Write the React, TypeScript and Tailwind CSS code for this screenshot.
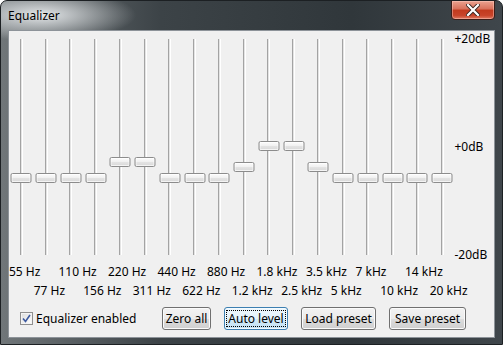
import React from "react";

// band label + thumb centre (px, page coords)
const BANDS: [string, number][] = [
  ["55 Hz", 178],
  ["77 Hz", 178],
  ["110 Hz", 178],
  ["156 Hz", 178],
  ["220 Hz", 162],
  ["311 Hz", 162],
  ["440 Hz", 178],
  ["622 Hz", 178],
  ["880 Hz", 178],
  ["1.2 kHz", 167],
  ["1.8 kHz", 146],
  ["2.5 kHz", 146],
  ["3.5 kHz", 167],
  ["5 kHz", 178],
  ["7 kHz", 178],
  ["10 kHz", 178],
  ["14 kHz", 178],
  ["20 kHz", 178],
];

const TRACK_TOP = 39;

function Button({ label, w, focused }: { label: string; w: string; focused?: boolean }) {
  return (
    <div
      className={`${w} h-[23px] rounded-[3px] border flex items-center justify-center text-[12px] text-black ${
        focused
          ? "border-[#3c7fb1] bg-[linear-gradient(#eef7fc,#e3f2fb_50%,#d3eaf8_50%,#c3e1f3)] shadow-[inset_0_0_0_1px_#f4fbff]"
          : "border-[#707070] bg-[linear-gradient(#f2f2f2,#ebebeb_50%,#dddddd_50%,#cfcfcf)] shadow-[inset_0_0_0_1px_#fbfbfb]"
      }`}
    >
      {focused ? (
        <span className="px-[1px] outline outline-1 outline-dotted outline-black leading-[15px]">{label}</span>
      ) : (
        <span className="leading-[15px]">{label}</span>
      )}
    </div>
  );
}

export default function App() {
  return (
    <div className="w-[503px] h-[345px] flex flex-col rounded-t-[7px] border border-[#1c2023] overflow-hidden font-['Noto_Sans',sans-serif] bg-[image:radial-gradient(ellipse_95px_26px_at_40px_14px,rgba(235,238,240,0.95),rgba(235,238,240,0)),linear-gradient(90deg,#707679,#3c4347_32%,#30373b_70%,#3f464b)]">
      {/* Title bar */}
      <div className="relative h-[29px] shrink-0 flex items-center pl-[7px]">
        <span className="text-[12px] text-black">Equalizer</span>
        <div className="absolute top-[-1px] right-[7px] w-[44px] h-[20px] rounded-b-[4px] border border-[#3b1d18] bg-[linear-gradient(#eba290,#d8705a_45%,#c23a1e_50%,#c8442a_80%,#e07a62)] shadow-[inset_0_0_0_1px_rgba(255,210,200,0.45)] flex items-center justify-center">
          <svg width="14" height="12" viewBox="0 0 14 12">
            <path d="M2 1 L12 11 M12 1 L2 11" stroke="#3a2520" strokeWidth="4" strokeLinecap="square" />
            <path d="M2 1 L12 11 M12 1 L2 11" stroke="#ffffff" strokeWidth="2.2" strokeLinecap="square" />
          </svg>
        </div>
      </div>

      {/* Client area */}
      <div className="mx-[7px] mb-[6px] flex-1 border border-[#8d9399] bg-[#f0f0f0] flex flex-col">
        <div className="flex pt-[8px]">
          <div className="grid grid-cols-[repeat(18,24.76px)]">
            {BANDS.map(([name, y]) => (
              <div key={name} className="relative h-[216px] flex justify-center">
                <div className="w-[3px] h-full border-l border-[#a3a3a3] bg-[linear-gradient(90deg,#e4e4e4_50%,#ffffff_50%)]" />
                <div
                  className="absolute left-1/2 -translate-x-1/2 w-[21px] h-[10px] rounded-[2px] border border-[#8c8c8c] bg-[linear-gradient(#fcfcfc,#f1f1f1_45%,#e3e3e3_55%,#d8d8d8)] shadow-[inset_0_0_0_1px_rgba(255,255,255,0.7)]"
                  style={{ top: y - 5 - TRACK_TOP }}
                />
              </div>
            ))}
          </div>
          <div className="my-[-8px] h-[232px] flex flex-col justify-between text-[12px] leading-[16px] text-black">
            <span>+20dB</span>
            <span>+0dB</span>
            <span>-20dB</span>
          </div>
        </div>

        {/* Frequency labels */}
        <div className="grid grid-cols-[repeat(18,24.76px)] grid-rows-[19px_19px] mt-[7px] text-[12px] leading-[19px] text-black">
          {BANDS.map(([name], i) => (
            <span
              key={name}
              className={`whitespace-nowrap ${i % 2 === 0 ? "row-start-1" : "row-start-2"}`}
              style={{ gridColumnStart: i + 1 }}
            >
              {name}
            </span>
          ))}
        </div>

        {/* Bottom row */}
        <div className="flex items-center mt-[7px] pl-[11px]">
          <label className="w-[142px] flex items-center gap-[3px] text-[12px] text-black">
            <span className="w-[13px] h-[13px] border border-[#8f8f8f] bg-[linear-gradient(135deg,#dcdcdc,#ffffff)] shadow-[inset_0_0_0_1px_#f4f4f4] flex items-center justify-center">
              <svg width="9" height="9" viewBox="0 0 9 9">
                <path d="M1 4.5 L3.5 7.5 L8 1" fill="none" stroke="#3d5aa0" strokeWidth="1.6" />
              </svg>
            </span>
            Equalizer enabled
          </label>
          <div className="flex gap-[13px]">
            <Button label="Zero all" w="w-[49px]" />
            <Button label="Auto level" w="w-[64px]" focused />
            <Button label="Load preset" w="w-[75px]" />
            <Button label="Save preset" w="w-[77px]" />
          </div>
        </div>
      </div>
    </div>
  );
}
